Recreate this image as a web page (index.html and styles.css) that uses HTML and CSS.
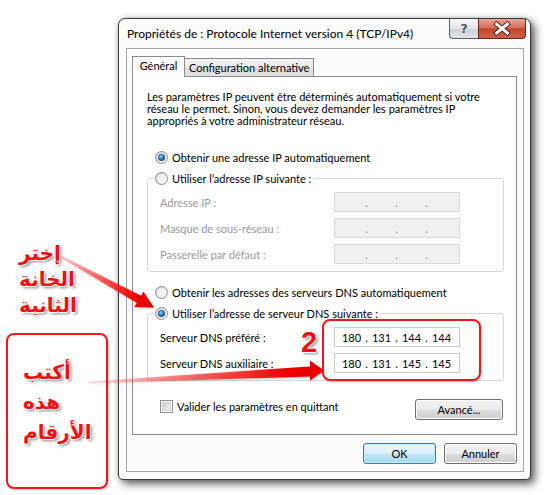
FILE: index.html
```html
<!DOCTYPE html>
<html lang="fr">
<head>
  <meta charset="UTF-8">
  <title>Propriétés de : Protocole Internet version 4 (TCP/IPv4)</title>
  <link rel="stylesheet" href="styles.css">
</head>
<body>
  <!-- shared gradients for the little controls -->
  <svg class="defs" aria-hidden="true">
    <defs>
      <linearGradient id="radio-bg" x1="0" y1="0" x2="1" y2="1">
        <stop offset="0" stop-color="#cfcfcf"/>
        <stop offset="1" stop-color="#fdfdfd"/>
      </linearGradient>
      <radialGradient id="radio-dot" cx="0.4" cy="0.35" r="0.7">
        <stop offset="0" stop-color="#8fd0f5"/>
        <stop offset="0.5" stop-color="#2f8ad0"/>
        <stop offset="1" stop-color="#0f3f6b"/>
      </radialGradient>
      <linearGradient id="check-bg" x1="0" y1="0" x2="1" y2="1">
        <stop offset="0" stop-color="#cbcbcb"/>
        <stop offset="1" stop-color="#f6f6f6"/>
      </linearGradient>
      <linearGradient id="arrow-a" gradientUnits="userSpaceOnUse" x1="62" y1="257" x2="153" y2="307">
        <stop offset="0" stop-color="#ff5050" stop-opacity="0.25"/>
        <stop offset="0.5" stop-color="#ff2a2a" stop-opacity="0.8"/>
        <stop offset="0.8" stop-color="#f40000"/>
        <stop offset="1" stop-color="#e00000"/>
      </linearGradient>
      <linearGradient id="arrow-b" gradientUnits="userSpaceOnUse" x1="88" y1="382" x2="324" y2="370">
        <stop offset="0" stop-color="#ff5050" stop-opacity="0.15"/>
        <stop offset="0.5" stop-color="#ff2a2a" stop-opacity="0.75"/>
        <stop offset="0.85" stop-color="#f00000"/>
        <stop offset="1" stop-color="#e00000"/>
      </linearGradient>
    </defs>
  </svg>

  <div class="stage">
    <div class="window">
      <div class="titlebar">
        <span class="title">Propriétés de : Protocole Internet version 4 (TCP/IPv4)</span>
        <div class="caption-buttons">
          <span class="cap-btn help">?</span>
          <span class="cap-btn close">
            <svg width="47" height="19" viewBox="0 0 47 19">
              <path d="M18 5 L29 14 M29 5 L18 14" stroke="#4a2a24" stroke-width="5" stroke-linecap="square"/>
              <path d="M18 5 L29 14 M29 5 L18 14" stroke="#fff" stroke-width="3" stroke-linecap="square"/>
            </svg>
          </span>
        </div>
      </div>

      <div class="client">
        <div class="tabs">
          <span class="tab active">Général</span>
          <span class="tab">Configuration alternative</span>
        </div>

        <div class="panel">
          <p class="intro">Les paramètres IP peuvent être déterminés automatiquement si votre<br>réseau le permet. Sinon, vous devez demander les paramètres IP<br>appropriés à votre administrateur réseau.</p>

          <label class="option first">
            <svg class="radio" width="13" height="13" viewBox="0 0 13 13"><circle cx="6.5" cy="6.5" r="6" fill="url(#radio-bg)" stroke="#8e8f8f"/><circle cx="6.5" cy="6.5" r="4.2" fill="#f4f4f4"/><circle cx="6.5" cy="6.5" r="3.3" fill="url(#radio-dot)" stroke="#1d4a72" stroke-width="0.6"/></svg>
            Obtenir une adresse IP automatiquement
          </label>

          <fieldset class="group">
            <legend>
              <label class="option">
                <svg class="radio" width="13" height="13" viewBox="0 0 13 13"><circle cx="6.5" cy="6.5" r="6" fill="url(#radio-bg)" stroke="#8e8f8f"/><circle cx="6.5" cy="6.5" r="4.2" fill="#f2f2f2"/></svg>
                Utiliser l’adresse IP suivante :
              </label>
            </legend>
            <div class="fields">
              <span class="field-label muted">Adresse IP :</span>
              <span class="ip disabled"><i></i><b>.</b><i></i><b>.</b><i></i><b>.</b><i></i></span>
              <span class="field-label muted">Masque de sous-réseau :</span>
              <span class="ip disabled"><i></i><b>.</b><i></i><b>.</b><i></i><b>.</b><i></i></span>
              <span class="field-label muted">Passerelle par défaut :</span>
              <span class="ip disabled"><i></i><b>.</b><i></i><b>.</b><i></i><b>.</b><i></i></span>
            </div>
          </fieldset>

          <label class="option after-group">
            <svg class="radio" width="13" height="13" viewBox="0 0 13 13"><circle cx="6.5" cy="6.5" r="6" fill="url(#radio-bg)" stroke="#8e8f8f"/><circle cx="6.5" cy="6.5" r="4.2" fill="#f2f2f2"/></svg>
            Obtenir les adresses des serveurs DNS automatiquement
          </label>

          <fieldset class="group">
            <legend>
              <label class="option">
                <svg class="radio" width="13" height="13" viewBox="0 0 13 13"><circle cx="6.5" cy="6.5" r="6" fill="url(#radio-bg)" stroke="#8e8f8f"/><circle cx="6.5" cy="6.5" r="4.2" fill="#f4f4f4"/><circle cx="6.5" cy="6.5" r="3.3" fill="url(#radio-dot)" stroke="#1d4a72" stroke-width="0.6"/></svg>
                Utiliser l’adresse de serveur DNS suivante :
              </label>
            </legend>
            <div class="fields">
              <span class="field-label">Serveur DNS préféré :</span>
              <span class="ip"><i>180</i><b>.</b><i>131</i><b>.</b><i>144</i><b>.</b><i>144</i></span>
              <span class="field-label">Serveur DNS auxiliaire :</span>
              <span class="ip"><i>180</i><b>.</b><i>131</i><b>.</b><i>145</i><b>.</b><i>145</i></span>
            </div>
          </fieldset>

          <div class="panel-bottom">
            <label class="option check">
              <svg width="13" height="13" viewBox="0 0 13 13"><rect x="0.5" y="0.5" width="12" height="12" fill="#fff" stroke="#8e8f8f"/><rect x="2.5" y="2.5" width="8" height="8" fill="url(#check-bg)" stroke="#d0d0d0"/></svg>
              Valider les paramètres en quittant
            </label>
            <button class="btn advanced">Avancé...</button>
          </div>
        </div>

        <div class="footer">
          <button class="btn default">OK</button>
          <button class="btn">Annuler</button>
        </div>
      </div>
    </div>

    <!-- red annotations drawn over the screenshot -->
    <svg class="arrows" width="554" height="495" viewBox="0 0 554 495">
      <polygon points="62,256 141.2,295.8 143.3,291.4 154,307.5 134.3,307 136.8,302.8 61,258" fill="url(#arrow-a)"/>
      <polygon points="88,381.5 310,366.5 310,360.5 324,370.5 310,380.5 310,376.5 88,383.5" fill="url(#arrow-b)"/>
    </svg>

    <div class="note note-pick" dir="rtl">إختر<br>الخانة<br>الثانية</div>

    <div class="red-box note-box">
      <div class="note note-write" dir="rtl">أكتب<br>هذه<br>الأرقام</div>
    </div>

    <div class="red-box dns-box"></div>
    <span class="step">2</span>
  </div>
</body>
</html>
```

FILE: styles.css
```css
body {
  margin: 0;
  background: #fff;
  font-family: Lato, "Noto Sans", sans-serif;
  font-size: 11px;
  color: #000;
}
.defs {
  position: absolute;
  width: 0;
  height: 0;
}
.stage {
  position: relative;
  width: 554px;
  height: 495px;
  padding: 18px 0 0 118px;
  box-sizing: border-box;
  overflow: hidden;
}

/* window frame */
.window {
  width: 413px;
  height: 462px;
  box-sizing: border-box;
  border: 1px solid #3c3c3c;
  border-radius: 7px 7px 5px 5px;
  background: #fbfbfb;
  box-shadow: 4px 4px 9px rgba(0, 0, 0, 0.6), 0 0 5px rgba(0, 0, 0, 0.2);
  display: flex;
  flex-direction: column;
}
.titlebar {
  height: 29px;
  flex: none;
  display: flex;
  justify-content: space-between;
  align-items: flex-start;
}
.title {
  padding: 7px 0 0 8px;
  font-size: 12px;
  line-height: 15px;
}
.caption-buttons {
  display: flex;
  margin-right: 4px;
}
.cap-btn {
  height: 20px;
  box-sizing: border-box;
  border: 1px solid #5a5f66;
  border-top: none;
  display: flex;
  align-items: center;
  justify-content: center;
}
.help {
  width: 30px;
  border-radius: 0 0 0 4px;
  background: linear-gradient(#f4f5f6, #e3e5e8 50%, #ced2d7 51%, #dfe2e6);
  color: #4f5660;
  font-family: "DejaVu Sans", sans-serif;
  font-weight: bold;
  font-size: 13px;
  text-shadow: 0 0 2px #fff;
}
.close {
  width: 48px;
  margin-left: -1px;
  border-color: #5c2a22;
  border-radius: 0 0 4px 0;
  background: linear-gradient(#e8a493, #d5705a 45%, #c2442d 52%, #d06048);
}

/* client area */
.client {
  flex: 1;
  margin: 0 6px 7px 7px;
  border: 1px solid #a6a6a6;
  padding: 7px 6px 0 5px;
  display: flex;
  flex-direction: column;
}
.tabs {
  display: flex;
  align-items: flex-end;
  height: 21px;
  flex: none;
}
.tab {
  height: 19px;
  box-sizing: border-box;
  border: 1px solid #898c95;
  border-bottom: none;
  padding: 0 4px;
  line-height: 18px;
  background: linear-gradient(#f3f3f3, #e9e9e9 50%, #dcdcdc 51%, #e4e4e4);
  margin-left: -1px;
}
.tab.active {
  height: 21px;
  width: 53px;
  margin-left: 0;
  padding: 0;
  text-align: center;
  line-height: 18px;
  background: #fff;
  position: relative;
  z-index: 1;
}
.panel {
  height: 359px;
  flex: none;
  margin-top: -1px;
  box-sizing: border-box;
  border: 1px solid #898c95;
  background: #fff;
  padding: 14px 12px 0 14px;
  display: flex;
  flex-direction: column;
}
.intro {
  margin: 0;
  line-height: 12px;
}
.option {
  display: flex;
  align-items: center;
  gap: 4px;
  height: 13px;
  line-height: 13px;
  white-space: nowrap;
}
.option.first {
  margin: 24px 0 0 8px;
}
.option.after-group {
  margin: 14px 0 0 8px;
}
.radio {
  flex: none;
}
.group {
  margin: 8px 0 0;
  border: 1px solid #d5d9dd;
  border-radius: 3px;
  padding: 7px 0 7px 12px;
}
.group legend {
  margin-left: -6px;
  padding: 0 3px 0 1px;
}
.fields {
  display: grid;
  grid-template-columns: 174px 126px;
  grid-auto-rows: 20px;
  row-gap: 6px;
  align-items: center;
}
.muted {
  color: #9a9a9a;
}
.ip {
  height: 20px;
  box-sizing: border-box;
  border: 1px solid #c9cbd0;
  background: #fff;
  display: flex;
  align-items: center;
  padding-left: 5px;
}
.ip.disabled {
  background: #f0f0f0;
  border-color: #d9d9d9;
  color: #8a8a8a;
}
.ip i {
  font-style: normal;
  width: 23px;
  text-align: center;
}
.ip b {
  font-weight: normal;
  width: 7px;
  text-align: center;
}
.panel-bottom {
  margin-top: 18px;
  display: flex;
  justify-content: space-between;
  align-items: flex-start;
}
.check {
  margin: 1px 0 0 13px;
}
.btn {
  height: 21px;
  box-sizing: border-box;
  border: 1px solid #707070;
  border-radius: 3px;
  background: linear-gradient(#f2f2f2, #ebebeb 50%, #dddddd 51%, #cfcfcf);
  box-shadow: inset 0 0 0 1px #fbfbfb;
  font-family: inherit;
  font-size: 11px;
  color: #000;
  padding: 0;
}
.advanced {
  width: 88px;
  margin-right: 1px;
}
.footer {
  margin-top: 8px;
  display: flex;
  justify-content: flex-end;
  gap: 8px;
}
.footer .btn {
  width: 73px;
}
.btn.default {
  border-color: #3c7fb1;
  background: linear-gradient(#eaf6fd, #d9f0fc 50%, #bee6fd 51%, #a7d9f5);
  box-shadow: inset 0 0 0 1px #c8e9fb;
}

/* annotations */
.arrows {
  position: absolute;
  left: 0;
  top: 0;
  filter: drop-shadow(1px 1px 1px rgba(0, 0, 0, 0.25));
}
.note {
  font-family: "DejaVu Sans", sans-serif;
  font-weight: bold;
  font-size: 20px;
  color: #f31010;
  text-align: left;
  text-shadow: 1px 0 0 #fff, -1px 0 0 #fff, 0 1px 0 #fff, 0 -1px 0 #fff,
    2px 2px 3px rgba(0, 0, 0, 0.45);
}
.note-pick {
  position: absolute;
  left: 19px;
  top: 240px;
  line-height: 26px;
}
.red-box {
  position: absolute;
  border: 2px solid #f01818;
  border-radius: 8px;
  box-shadow: 1px 1px 2px rgba(0, 0, 0, 0.25);
  box-sizing: border-box;
}
.note-box {
  left: 6px;
  top: 333px;
  width: 102px;
  height: 156px;
  padding: 22px 0 0 15px;
}
.note-write {
  line-height: 30px;
}
.dns-box {
  left: 322px;
  top: 319px;
  width: 159px;
  height: 62px;
}
.step {
  position: absolute;
  left: 301px;
  top: 328px;
  font-family: "Liberation Sans", sans-serif;
  font-weight: bold;
  font-size: 29px;
  line-height: 29px;
  color: #f31010;
  text-shadow: 1px 0 0 #fff, -1px 0 0 #fff, 0 1px 0 #fff, 0 -1px 0 #fff,
    2px 2px 3px rgba(0, 0, 0, 0.45);
}
```
